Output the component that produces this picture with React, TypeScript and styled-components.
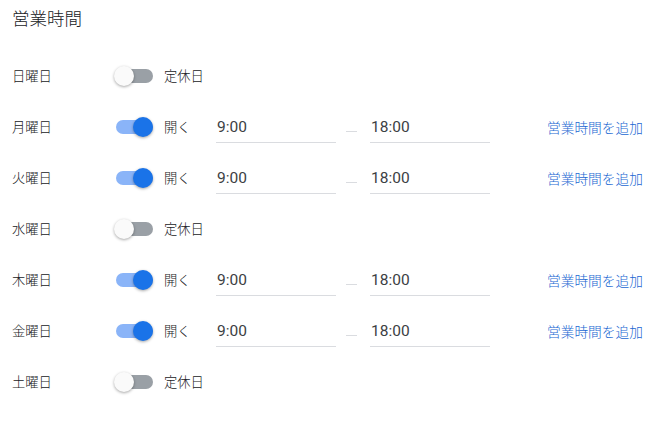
import React from "react";
import styled, { createGlobalStyle } from "styled-components";

const Global = createGlobalStyle`
  html, body { margin: 0; padding: 0; background: #fff; }
  body { font-family: Roboto, "Noto Sans CJK JP", sans-serif; color: #3c4043; }
`;

const Page = styled.div`
  padding: 7px 0 0 12px;
`;

const Title = styled.h1`
  margin: 0 0 19px 0;
  font-size: 17.5px;
  line-height: 24px;
  font-weight: 300;
  color: #202124;
`;

const Row = styled.div`
  display: flex;
  align-items: center;
  height: 51px;
`;

const DayLabel = styled.div`
  width: 102px;
  font-size: 13.3px;
  font-weight: 300;
  color: #202124;
`;

const SwitchBox = styled.div`
  position: relative;
  width: 40px;
  height: 20px;
  flex: none;
`;

const Track = styled.div<{ $on: boolean }>`
  position: absolute;
  left: 2px;
  top: 3px;
  width: 37px;
  height: 14px;
  border-radius: 7px;
  background: ${(p) => (p.$on ? "#8ab4f8" : "#9aa0a6")};
`;

const Knob = styled.div<{ $on: boolean }>`
  position: absolute;
  top: 0;
  left: ${(p) => (p.$on ? "19px" : "0px")};
  width: 20px;
  height: 20px;
  border-radius: 50%;
  background: ${(p) => (p.$on ? "#1a73e8" : "#fafafa")};
  box-shadow: 0 1px 3px rgba(0, 0, 0, 0.35);
`;

const Status = styled.div`
  margin-left: 10px;
  width: 52px;
  font-size: 13.3px;
  font-weight: 300;
  color: #202124;
`;

const TimeField = styled.input`
  box-sizing: border-box;
  width: 120px;
  height: 30px;
  margin-top: 2px;
  padding: 0 1px;
  border: none;
  border-bottom: 1px solid #dadce0;
  outline: none;
  background: transparent;
  font-family: Roboto, sans-serif;
  font-size: 15.5px;
  color: #3c4043;
`;

const Dash = styled.div`
  width: 11px;
  height: 1px;
  margin: 10px 13px 0 10px;
  background: #dadce0;
`;

const AddLink = styled.a`
  margin-left: 57px;
  font-size: 13.7px;
  font-weight: 300;
  color: #1967d2;
  text-decoration: none;
  cursor: pointer;
`;

type Day = { name: string; open: boolean };

const days: Day[] = [
  { name: "日曜日", open: false },
  { name: "月曜日", open: true },
  { name: "火曜日", open: true },
  { name: "水曜日", open: false },
  { name: "木曜日", open: true },
  { name: "金曜日", open: true },
  { name: "土曜日", open: false },
];

const Switch = ({ on }: { on: boolean }) => (
  <SwitchBox>
    <Track $on={on} />
    <Knob $on={on} />
  </SwitchBox>
);

export default function App() {
  return (
    <Page>
      <Global />
      <Title>営業時間</Title>
      {days.map((d) => (
        <Row key={d.name}>
          <DayLabel>{d.name}</DayLabel>
          <Switch on={d.open} />
          <Status>{d.open ? "開く" : "定休日"}</Status>
          {d.open && (
            <>
              <TimeField defaultValue="9:00" readOnly />
              <Dash />
              <TimeField defaultValue="18:00" readOnly />
              <AddLink>営業時間を追加</AddLink>
            </>
          )}
        </Row>
      ))}
    </Page>
  );
}
